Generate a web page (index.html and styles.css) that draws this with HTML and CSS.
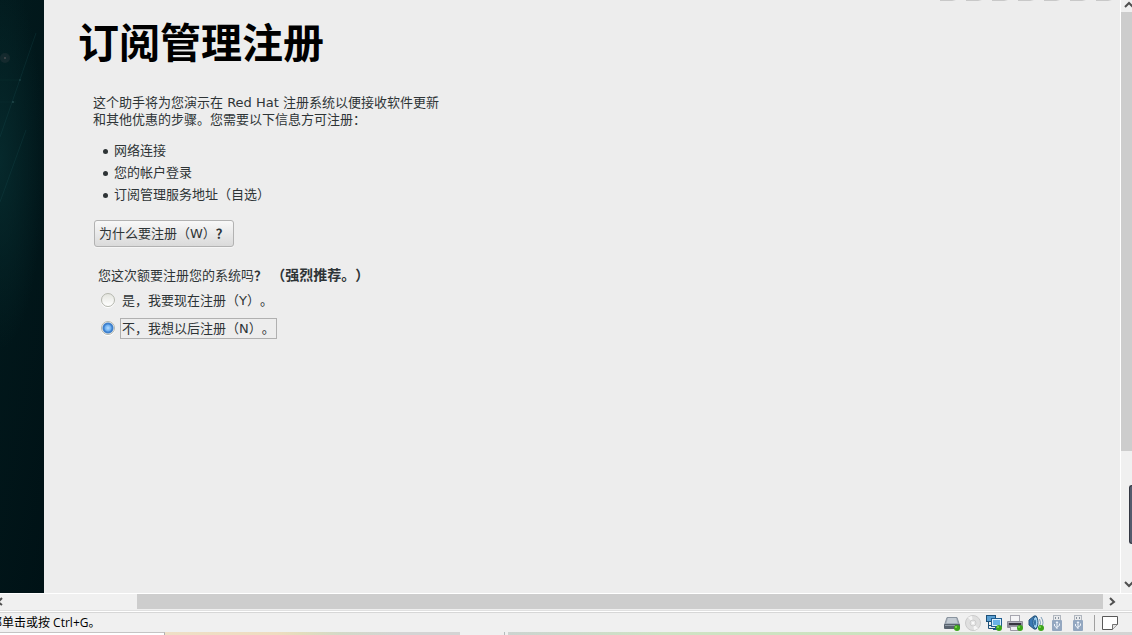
FILE: index.html
```html
<!DOCTYPE html>
<html lang="zh-CN">
<head>
    <meta charset="UTF-8">
    <meta name="viewport" content="width=device-width, initial-scale=1.0">
    <title>订阅管理注册</title>
    <link rel="stylesheet" href="styles.css">
</head>
<body>
    <div class="viewer">
        <div class="screen">
            <aside class="wallpaper">
                <svg width="44" height="593" aria-hidden="true">
                    <g stroke="#1d5558" stroke-opacity=".25" fill="none">
                        <path d="M0 137 L36 33"/>
                        <path d="M0 202 L26 130"/>
                        <path d="M0 80 H20 M0 102 H16" stroke-opacity=".12"/>
                    </g>
                    <circle cx="5" cy="58" r="5" fill="#3a3f44" fill-opacity=".3"/>
                    <circle cx="5" cy="58" r="1" fill="#6a6467" fill-opacity=".6"/>
                    <circle cx="20" cy="80" r="1" fill="#2b5557" fill-opacity=".5"/>
                    <circle cx="13" cy="102" r="1" fill="#3b6567" fill-opacity=".5"/>
                </svg>
            </aside>
            <main class="page">
                <h1>订阅管理注册</h1>
                <div class="content">
                    <p class="intro">这个助手将为您演示在 Red Hat 注册系统以便接收软件更新<br>和其他优惠的步骤。您需要以下信息方可注册：</p>
                    <ul class="needs">
                        <li>网络连接</li>
                        <li>您的帐户登录</li>
                        <li>订阅管理服务地址（自选）</li>
                    </ul>
                    <button type="button" class="why">为什么要注册（W）<b>？</b></button>
                    <fieldset class="choice">
                        <legend>您这次额要注册您的系统吗<b>？</b> <strong>（强烈推荐。）</strong></legend>
                        <div class="option">
                            <input type="radio" id="yes" name="register">
                            <label for="yes">是，我要现在注册（Y）。</label>
                        </div>
                        <div class="option">
                            <input type="radio" id="no" name="register" checked>
                            <label for="no" class="focused">不，我想以后注册（N）。</label>
                        </div>
                    </fieldset>
                </div>
            </main>
        </div>
        <div class="vscroll">
            <button type="button" class="arrow" aria-label="向上"><svg width="11" height="12"><path d="M4 7 L8 3 L12 7" class="chevron"/></svg></button>
            <div class="vthumb"></div>
            <div class="edge-handle"></div>
            <button type="button" class="arrow" aria-label="向下"><svg width="11" height="18"><path d="M4 7 L8 11 L12 7" class="chevron"/></svg></button>
        </div>
    </div>

    <div class="hscroll">
        <button type="button" class="arrow" aria-label="向左"><svg width="8" height="15"><path d="M2 4 L-2 8 L2 11" class="chevron"/></svg></button>
        <div class="hthumb"></div>
        <button type="button" class="arrow" aria-label="向右"><svg width="29" height="15"><path d="M7 4 L11 8 L7 11" class="chevron"/></svg></button>
    </div>

    <footer class="statusbar">
        <span class="hint">部单击或按 Ctrl+G。</span>
        <div class="devices">
            <!-- hard disk -->
            <svg viewBox="0 0 16 16">
                <path d="M3 2.500 H13 L15.500 10 H.5 Z" fill="#a3adb8" stroke="#8a949f"/>
                <path d="M4 3 H12 L13.500 8 H2.500 Z" fill="#c3cbd3"/>
                <rect x="0" y="9" width="16" height="5" rx="1" fill="#59636f"/>
                <path d="M1 10.500 H11" stroke="#919ba6"/>
                <circle cx="13" cy="13" r="3" fill="#3da51c"/><circle cx="12" cy="12" r="1" fill="#85dd55"/>
            </svg>
            <!-- cd -->
            <svg viewBox="0 0 16 16">
                <circle cx="8" cy="8" r="7.5" fill="#dfdfdf" stroke="#cbcbcb"/>
                <path d="M8 8 L3 2.500 A7 7 0 0 1 7 1 Z M8 8 L13 13.500 A7 7 0 0 1 9 15 Z" fill="#f6f6f6"/>
                <circle cx="8" cy="8" r="3" fill="#e9e9e9" stroke="#cdcdcd"/>
                <circle cx="8" cy="8" r="1" fill="#fff"/>
            </svg>
            <!-- network -->
            <svg viewBox="0 0 16 16">
                <rect x=".5" y=".5" width="9" height="6" fill="#5a9fd2" stroke="#1d5078"/>
                <path d="M2.500 7 V13.500 H9 M2.500 10.500 H5" stroke="#1d5078" fill="none"/>
                <rect x="5" y="3" width="11" height="9" fill="#205e91"/>
                <rect x="6" y="4" width="9" height="7" fill="#d9effc"/>
                <rect x="7" y="5" width="7" height="5" fill="#69b2e7"/>
                <path d="M7 14.500 H12 M9.500 12 V14" stroke="#205e91"/>
                <circle cx="13" cy="13" r="3" fill="#3da51c"/><circle cx="12" cy="12" r="1" fill="#85dd55"/>
            </svg>
            <!-- printer -->
            <svg viewBox="0 0 16 16">
                <rect x="3.500" y=".5" width="9" height="6" fill="#f5f5f7" stroke="#a6a6af"/>
                <rect x="0" y="6" width="16" height="7" rx="1" fill="#8f8d9a"/>
                <path d="M1 7.500 H15" stroke="#b4b2bf"/>
                <path d="M2 9 H14" stroke="#373440" stroke-width="2"/>
                <path d="M3.500 11.500 H12.500 V15.500 H3.500 Z" fill="#eeeef2" stroke="#9b99a5"/>
                <circle cx="13" cy="13" r="3" fill="#3da51c"/><circle cx="12" cy="12" r="1" fill="#85dd55"/>
            </svg>
            <!-- sound -->
            <svg viewBox="0 0 16 16">
                <path d="M1 5 L6 1 Q9 0 9 3 V12 Q9 15 6 14 L1 10 Z" fill="#3a79b4" stroke="#285579"/>
                <ellipse cx="7.500" cy="7.500" rx="2.500" ry="6" fill="#9ed1f3" stroke="#24567f"/>
                <ellipse cx="7" cy="7.500" rx="1" ry="3" fill="#2e6a9d"/>
                <path d="M11.500 4 Q13.500 8 11.500 11 M13 2 Q17 8 13 13" stroke="#7c9db8" fill="none"/>
                <circle cx="13" cy="13" r="3" fill="#3da51c"/><circle cx="12" cy="12" r="1" fill="#85dd55"/>
            </svg>
            <!-- usb -->
            <svg viewBox="0 0 16 16">
                <rect x="4.500" y=".5" width="7" height="5" fill="#e8eaec" stroke="#b0b6be"/>
                <path d="M6.500 2 V4 M9.500 2 V4" stroke="#89939f"/>
                <rect x="3" y="5" width="10" height="11" rx="1" fill="#93a7c0"/>
                <path d="M8 14 V7 M5.500 9 V11 L8 13 M10.500 8.500 V10.500 L8 12" stroke="#eff4fa" fill="none"/>
                <path d="M6.500 8 L8 6 L9.500 8 Z" fill="#eff4fa"/>
            </svg>
            <svg viewBox="0 0 16 16">
                <rect x="4.500" y=".5" width="7" height="5" fill="#e8eaec" stroke="#b0b6be"/>
                <path d="M6.500 2 V4 M9.500 2 V4" stroke="#89939f"/>
                <rect x="3" y="5" width="10" height="11" rx="1" fill="#93a7c0"/>
                <path d="M8 14 V7 M5.500 9 V11 L8 13 M10.500 8.500 V10.500 L8 12" stroke="#eff4fa" fill="none"/>
                <path d="M6.500 8 L8 6 L9.500 8 Z" fill="#eff4fa"/>
            </svg>
            <span class="divider"></span>
            <!-- message log -->
            <svg viewBox="0 0 16 16">
                <path d="M.5 1.500 H15.500 V9.500 L10.500 14.500 H.5 Z" fill="#fff" stroke="#595959"/>
                <path d="M10.500 14.500 V9.500 H15.500" fill="#e3e3e3" stroke="#737373"/>
            </svg>
        </div>
    </footer>
    <div class="underlay"><i class="tab"></i><i class="sand"></i><i class="gap"></i><i class="grass"></i></div>
</body>
</html>
```
FILE: styles.css
```css
:root {
    --panel: #ededed;
    --chrome: #f0f0f0;
    --thumb: #cdcdcd;
    --text: #2e3436;
}

* {
    margin: 0;
    padding: 0;
    box-sizing: border-box;
}

body {
    display: flex;
    flex-direction: column;
    height: 100vh;
    overflow: hidden;
    background: var(--chrome);
    color: var(--text);
    font: 13px/17px "DejaVu Sans", "Noto Sans CJK SC", sans-serif;
    text-spacing-trim: space-all;
}

button {
    font: inherit;
    color: inherit;
}

.viewer {
    flex: 1;
    display: flex;
    min-height: 0;
    border-bottom: 1px solid #fff;
}

.screen {
    flex: 1;
    display: flex;
    overflow: hidden;
    background: var(--panel);
    border-right: 1px solid #fff;
}

.wallpaper {
    width: 44px;
    background: radial-gradient(ellipse 44px 190px at 0 160px, #06292c, rgba(6, 41, 44, 0)), linear-gradient(100deg, #021a1d, #001216);
}

.wallpaper svg {
    display: block;
}

.page {
    flex: 1;
    padding: 14px 34px;
    /* bottom edge of the banner scrolled off above */
    background: repeating-linear-gradient(90deg, #c8c8c8 0, #c8c8c8 12px, transparent 16px, transparent 26px) no-repeat right top / 180px 1px;
}

h1 {
    font-size: 41px;
    line-height: 60px;
    color: #000;
}

.content {
    padding: 20px 15px;
}

.needs {
    list-style: none;
    margin: 12px 0 14px 10px;
}

.needs li {
    display: flex;
    align-items: center;
    gap: 6px;
    line-height: 22px;
}

.needs li::before {
    content: "";
    width: 5px;
    height: 5px;
    border-radius: 50%;
    background: var(--text);
}

.why {
    display: block;
    height: 27px;
    margin-left: 1px;
    padding: 0 4px;
    border: 1px solid #b2b2b2;
    border-radius: 3px;
    background: linear-gradient(#f8f8f8, #dadada);
    box-shadow: 0 1px 0 #f6f6f6;
    text-spacing-trim: space-all;
}

.choice {
    border: none;
    margin: 20px 0 0 5px;
}

.choice legend {
    margin-bottom: 2px;
}

.choice strong {
    font-size: 14px;
}

.option {
    display: flex;
    align-items: center;
    gap: 5px;
    height: 28px;
    padding-left: 3px;
}

.option input {
    appearance: none;
    width: 14px;
    height: 14px;
    border: 1px solid #b5b7ae;
    border-radius: 50%;
    background: linear-gradient(#e4e5df, #fff);
    box-shadow: 0 1px 0 #fff;
}

.option input:checked {
    background: radial-gradient(circle at 6px 6px, #b7dcfc 0, #69aef2 3px, #3f80cc 4px, #3f80cc 5px, #f4f4f0 6px);
}

.option label {
    padding: 1px;
    border: 1px solid transparent;
}

.option .focused {
    border-color: #b0b0b0;
}

/* scrollbars */
.vscroll {
    position: relative;
    display: flex;
    flex-direction: column;
    width: 11px;
}

.arrow {
    display: block;
    border: none;
    background: none;
    overflow: hidden;
}

.arrow svg {
    display: block;
}

.chevron {
    fill: none;
    stroke: #505050;
    stroke-width: 2;
}

.vthumb {
    height: 74%;
    margin-bottom: auto;
    background: var(--thumb);
}

.edge-handle {
    position: absolute;
    right: 0;
    bottom: 49px;
    width: 3px;
    height: 59px;
    border: 1px solid #343843;
    border-right: none;
    border-radius: 3px 0 0 3px;
    background: #535b6c;
}

.hscroll {
    display: flex;
    height: 17px;
    border-bottom: 1px solid #e0e0e0;
    padding-bottom: 1px;
}

.hthumb {
    flex: 1;
    margin-left: 129px;
    background: var(--thumb);
}

/* status bar */
.statusbar {
    display: flex;
    align-items: center;
    justify-content: space-between;
    height: 21px;
    padding: 2px 14px 0 0;
    border-top: 1px solid #fff;
    box-shadow: inset 0 1px 0 #d7d7d7;
    color: #000;
    font: 12px/18px "Open Sans", "Noto Sans CJK SC", sans-serif;
}

/* the hint is scrolled partly out of the window */
.hint {
    margin-left: -10px;
}

.devices {
    display: flex;
    align-items: center;
    gap: 5px;
}

.devices svg {
    width: 16px;
    height: 16px;
}

.divider {
    width: 1px;
    height: 16px;
    margin: 0 2px 0 3px;
    background: #a0a0a0;
}

.underlay {
    display: flex;
    height: 3px;
}

.tab {
    width: 165px;
    border-top: 1px solid #c4c4c4;
    border-right: 1px solid #b0b0b0;
    background: #fff;
}

.sand {
    width: 295px;
    background: linear-gradient(90deg, #efdfc6, #efdcc0 38%, #e3ddbd 46%, #d3d9c8 60%, #d4d4d4 80%);
}

.gap {
    width: 45px;
    border-right: 1px solid #b5bcbc;
}

.grass {
    flex: 1;
    margin-left: 3px;
    background: linear-gradient(90deg, #ccd4d0, #cfe3c4 25%, #cbe3bf 60%, #d4d8d0 80%, #d4d4d4);
}
```
